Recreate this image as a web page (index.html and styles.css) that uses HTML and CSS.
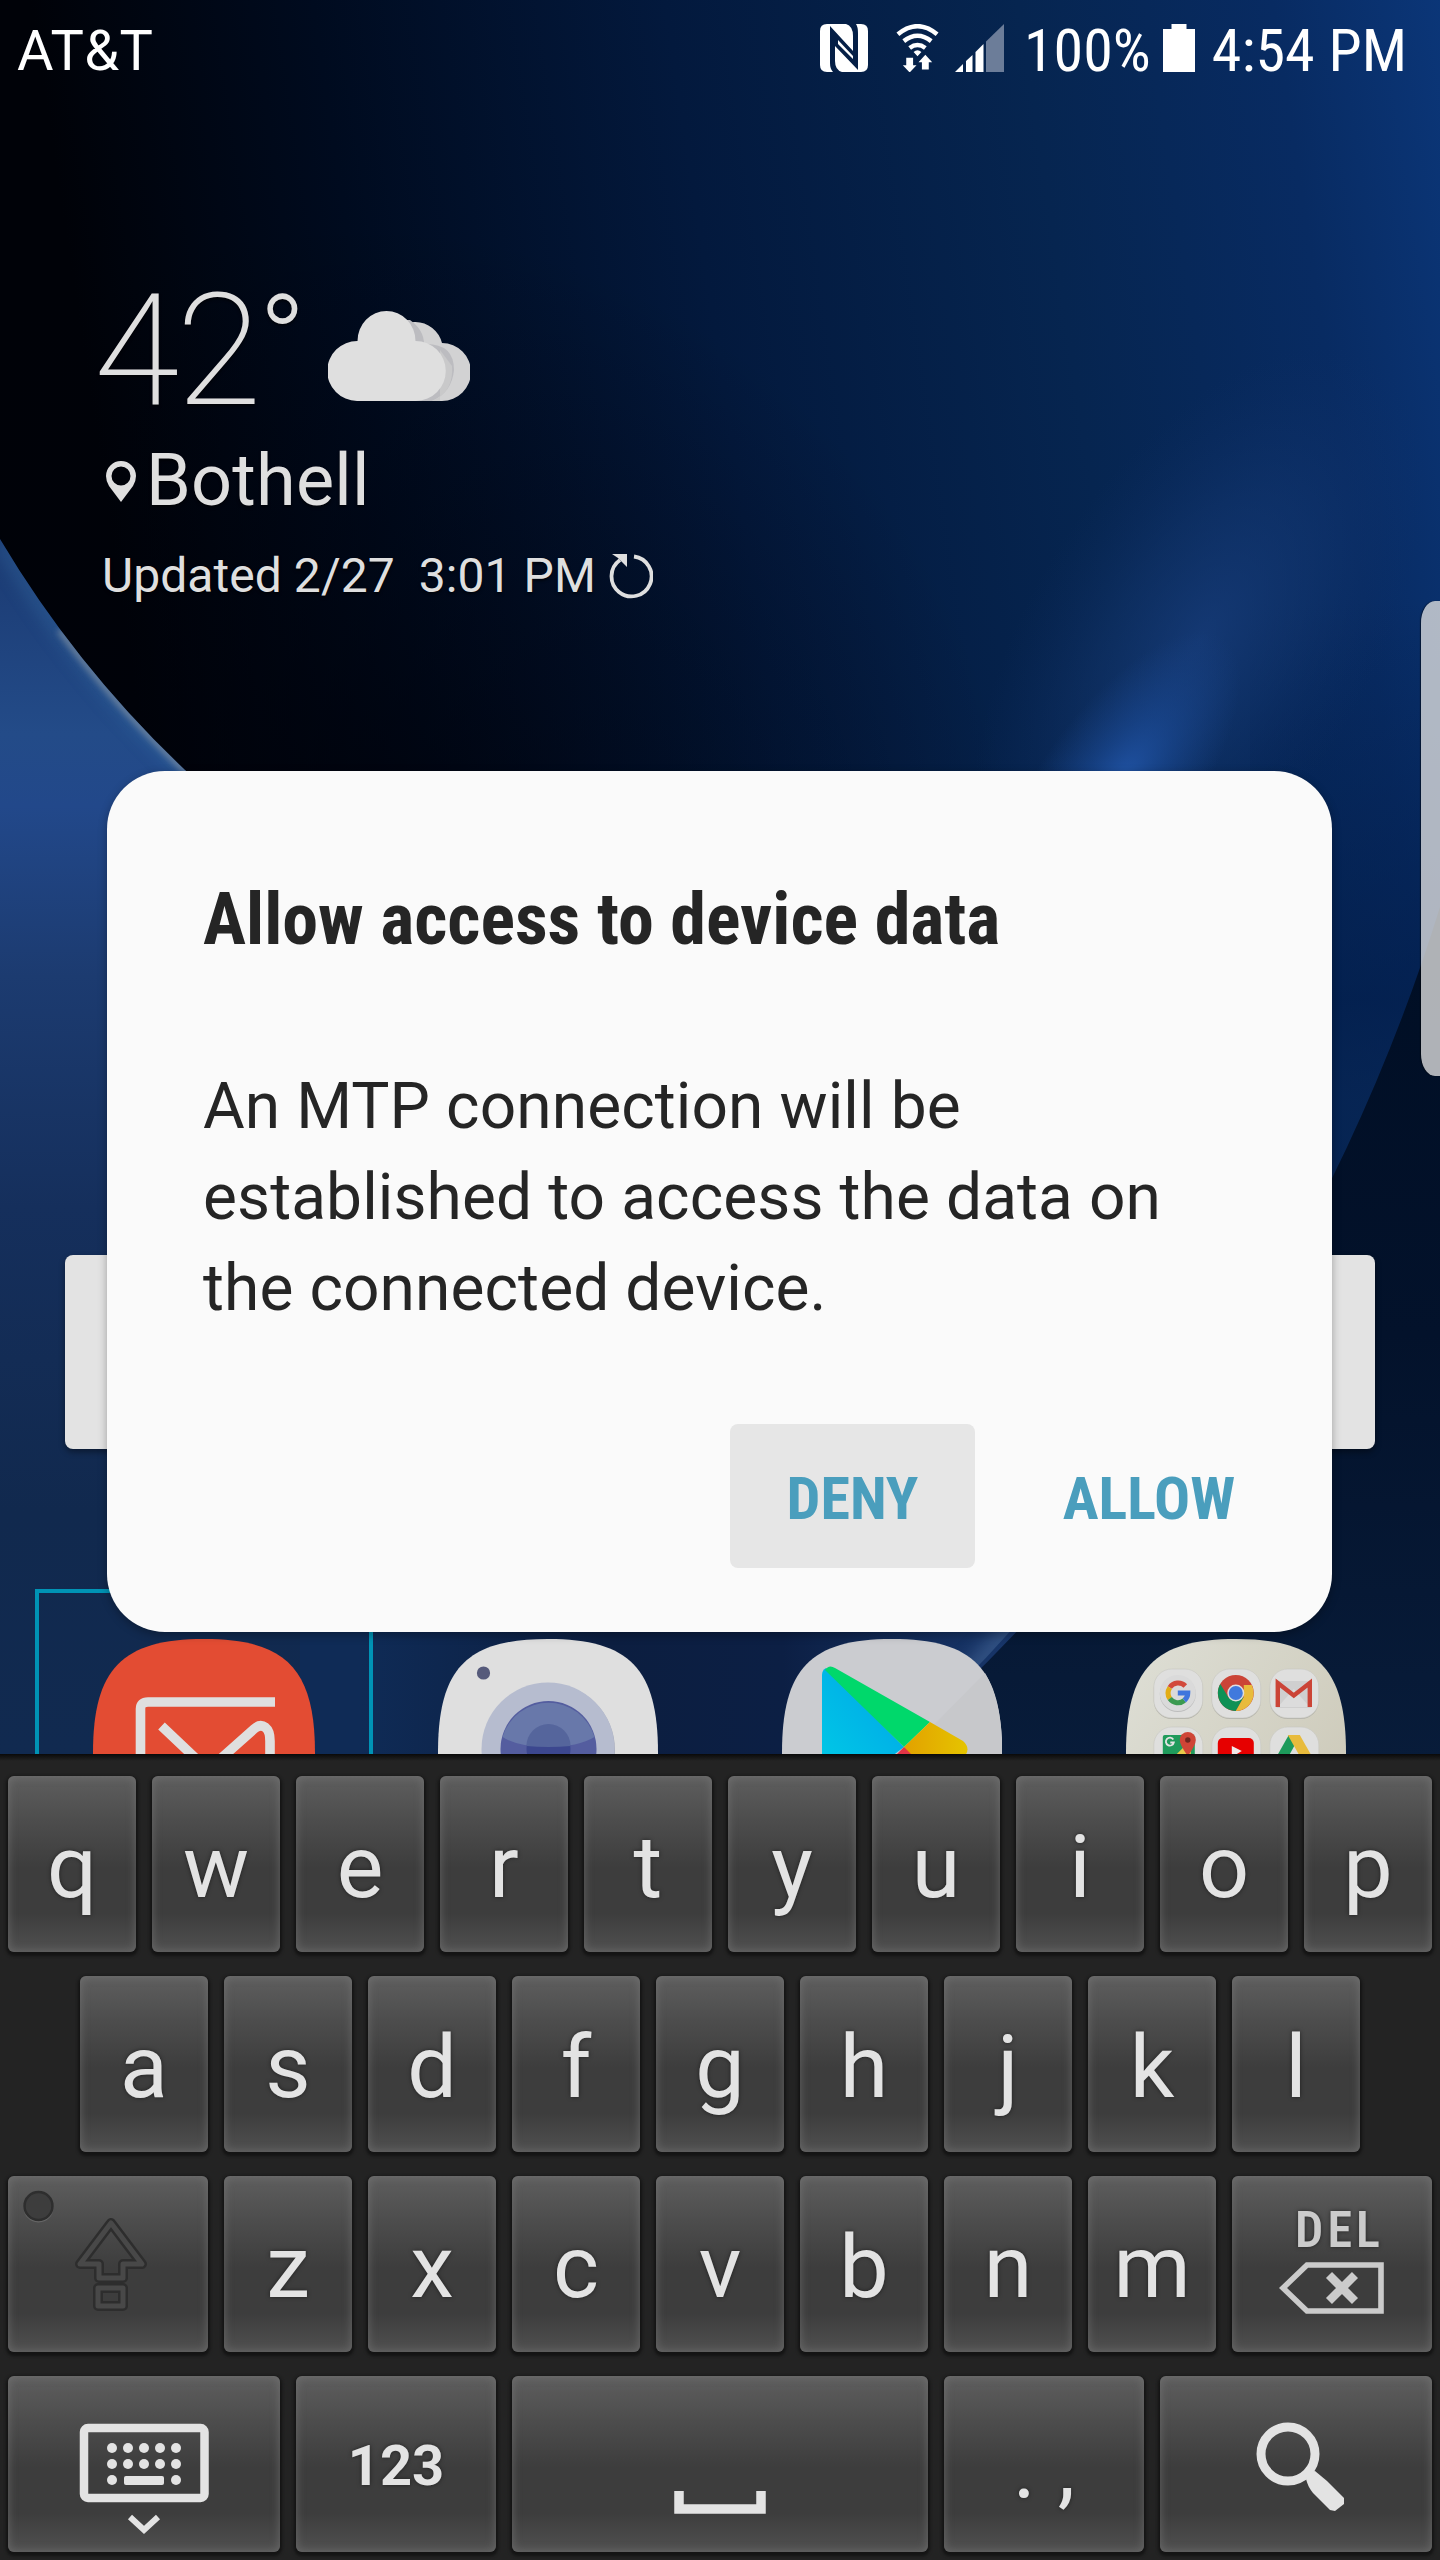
FILE: index.html
```html
<!DOCTYPE html>
<html lang="en">
<head>
<meta charset="utf-8">
<title>Home screen</title>
<link rel="stylesheet" href="styles.css">
</head>
<body>
<main class="phone">
  <svg class="wallpaper" viewBox="0 0 1440 1754" aria-hidden="true">
    <defs>
      <linearGradient id="sky" gradientUnits="userSpaceOnUse" x1="80" y1="330" x2="1460" y2="120">
        <stop offset="0" stop-color="#000208"/>
        <stop offset=".2" stop-color="#000b1f"/>
        <stop offset=".45" stop-color="#03193d"/>
        <stop offset=".7" stop-color="#062550"/>
        <stop offset=".88" stop-color="#082b62"/>
        <stop offset="1" stop-color="#0b3678"/>
      </linearGradient>
      <radialGradient id="fade" gradientUnits="userSpaceOnUse" cx="340" cy="900" r="680">
        <stop offset="0" stop-color="#00020a" stop-opacity=".85"/>
        <stop offset=".4" stop-color="#00020a" stop-opacity=".45"/>
        <stop offset="1" stop-color="#00020a" stop-opacity="0"/>
      </radialGradient>
      <linearGradient id="dusk" gradientUnits="userSpaceOnUse" x1="0" y1="600" x2="0" y2="1100">
        <stop offset="0" stop-color="#021d4c" stop-opacity="0"/>
        <stop offset=".8" stop-color="#021d4a" stop-opacity=".7"/>
        <stop offset="1" stop-color="#06224e" stop-opacity=".6"/>
      </linearGradient>
      <radialGradient id="halo" gradientUnits="userSpaceOnUse" cx="0" cy="0" r="1" gradientTransform="translate(1200 640) rotate(-58) scale(330 170)">
        <stop offset="0" stop-color="#1a4080" stop-opacity=".7"/>
        <stop offset=".5" stop-color="#183c78" stop-opacity=".35"/>
        <stop offset="1" stop-color="#123067" stop-opacity="0"/>
      </radialGradient>
      <radialGradient id="glow" gradientUnits="userSpaceOnUse" cx="0" cy="0" r="1" gradientTransform="translate(1118 784) rotate(-54) scale(180 76)">
        <stop offset="0" stop-color="#2358ae" stop-opacity=".9"/>
        <stop offset=".45" stop-color="#1d4f9f" stop-opacity=".5"/>
        <stop offset="1" stop-color="#1d4a94" stop-opacity="0"/>
      </radialGradient>
      <linearGradient id="rim" gradientUnits="userSpaceOnUse" x1="0" y1="539" x2="0" y2="1754">
        <stop offset="0" stop-color="#1b3a72"/>
        <stop offset=".16" stop-color="#234b88"/>
        <stop offset=".22" stop-color="#22488a"/>
        <stop offset=".36" stop-color="#1c3b70"/>
        <stop offset=".55" stop-color="#152f5c"/>
        <stop offset=".8" stop-color="#11294e"/>
        <stop offset="1" stop-color="#112a50"/>
      </linearGradient>
      <linearGradient id="floor" gradientUnits="userSpaceOnUse" x1="360" y1="0" x2="1010" y2="0">
        <stop offset="0" stop-color="#0f2b56"/>
        <stop offset=".38" stop-color="#0c1e40"/>
        <stop offset=".65" stop-color="#0c1f44"/>
        <stop offset="1" stop-color="#18366a"/>
      </linearGradient>
      <linearGradient id="night" x1="0" y1="0" x2="0" y2="1">
        <stop offset="0" stop-color="#000e24"/>
        <stop offset=".5" stop-color="#03122b"/>
        <stop offset="1" stop-color="#081c3a"/>
      </linearGradient>
      <filter id="soft"><feGaussianBlur stdDeviation="9"/></filter>
      <filter id="fine"><feGaussianBlur stdDeviation="3"/></filter>
      <clipPath id="rimClip"><path d="M0 539A1070 1070 0 0 0 185 770L300 870V1754H0Z"/></clipPath>
      <clipPath id="floorClip"><path d="M360 1600H1038A1850 1850 0 0 1 880 1762H360Z"/></clipPath>
    </defs>
    <rect width="1440" height="1754" fill="url(#sky)"/>
    <rect width="1440" height="1754" fill="url(#fade)"/>
    <rect x="1250" y="600" width="190" height="900" fill="url(#dusk)"/>
    <rect width="1440" height="1200" fill="url(#halo)"/>
    <rect width="1440" height="1200" fill="url(#glow)"/>
    <g clip-path="url(#rimClip)">
      <rect y="500" width="400" height="1254" fill="url(#rim)"/>
      <path d="M0 539A1070 1070 0 0 0 185 770L300 870" fill="none" stroke="#4384b8" stroke-width="14" opacity=".35" filter="url(#soft)"/>
      <path d="M60 630A1070 1070 0 0 0 185 770L300 870" fill="none" stroke="#a3a8ac" stroke-width="7" opacity=".55" filter="url(#fine)"/>
    </g>
    <rect x="300" y="1560" width="760" height="194" fill="url(#floor)"/>
    <path d="M1440 907A1850 1850 0 0 1 880 1762H1440Z" fill="url(#night)"/>
    <g clip-path="url(#floorClip)">
      <path d="M1038 1600A1850 1850 0 0 1 880 1762" fill="none" stroke="#5577a6" stroke-width="20" opacity=".5" filter="url(#soft)"/>
    </g>
  </svg>

  <section class="home">
    <header class="status">
      <span class="carrier">AT&amp;T</span>
      <div class="indicators">
        <svg class="nfc" viewBox="0 0 48 48"><path d="M7 0H26Q33 2 33 12V27L10 2V39Q10 45 13 48H7Q0 48 0 41V7Q0 0 7 0Z M36 0H41Q48 0 48 7V41Q48 48 41 48H22Q15 46 15 37V22L38 46V9Q38 3 36 0Z M18 16L33 32V35L18 20Z" fill="#fff"/></svg>
        <svg class="wifi" viewBox="0 0 43 49"><g fill="none" stroke="#fff" stroke-width="4.6"><path d="M1.500 10.500Q21.500 -6 41.500 10.500"/><path d="M7.500 17.500Q21.500 6.500 35.500 17.500"/><path d="M13.500 24.500Q21.500 18.500 29.500 24.500"/></g><path d="M21.500 33L17.500 28.500Q21.500 25 25.500 28.500Z M10 34.500H17V42H20.500L13.500 49.500L6.500 42H10Z M26 46.500V39H22.500L29.500 31.500L36.500 39H33V46.500Z" fill="#fff"/></svg>
        <svg class="signal" viewBox="0 0 49 48"><path d="M0 48L8 40V48Z M11 37L17.500 31V48H11Z M20.500 28L28.500 20V48H20.500Z" fill="#fff"/><path d="M31 17.500L49 0V48H31Z" fill="#6c7d99"/></svg>
        <span class="charge">100%</span>
        <svg class="battery" viewBox="0 0 32 48"><path d="M8.500 0H23.500V5H32V48H0V5H8.500Z" fill="#fff"/></svg>
        <span class="clock">4:54 PM</span>
      </div>
    </header>

    <section class="weather">
      <div class="now">
        <span class="temp">42<span class="degree">°</span></span>
        <svg class="cloud" viewBox="0 0 142 91"><g><path d="M60 91A30 30 0 0 1 60 32A28 28 0 0 1 114 33A29 29 0 0 1 114 91Z" fill="#d2d2d3"/><path d="M82 10Q96 20 96 34Q126 33 126 60Q124 82 104 91H60V10Z" fill="#bcbcc0"/><path d="M104 91Q126 82 124 56L112 40V91Z" fill="#c9c9ca"/><path d="M29 91A30 30 0 0 1 29.500 31A29 30 0 0 1 87.500 31A30 30 0 0 1 88 91Z" fill="#dfdfdf"/></g></svg>
      </div>
      <div class="place">
        <svg class="pin" viewBox="0 0 30 41"><path fill-rule="evenodd" d="M15 0A15 15 0 0 1 30 15Q30 20 27 25L15 41L3 25Q0 20 0 15A15 15 0 0 1 15 0ZM15 5.500A9.500 9.500 0 1 0 15 24.500A9.500 9.500 0 1 0 15 5.500Z" fill="#dfdfdf"/></svg>
        <span>Bothell</span>
      </div>
      <div class="updated">
        <span>Updated 2/27  3:01 PM</span>
        <svg class="reload" viewBox="0 0 45 46"><path d="M26 3.500A20 20 0 1 1 12 7" fill="none" stroke="#dfdfdf" stroke-width="3.800"/><path d="M4 1H19V14L14.500 9.500L10 5Z" fill="#dfdfdf"/></svg>
      </div>
    </section>

    <div class="search"></div>

    <nav class="dock">
      <div class="slot focused">
        <svg class="app mail" viewBox="0 0 220 220"><path d="M-1 114C-1 30 28 0 110 0C192 0 221 30 221 114V220H-1Z" fill="#e34c33"/><g fill="none" stroke="#dfdfdf" stroke-width="9.600"><path d="M46.500 130V70Q46.500 63 54 63H181"/><path d="M67.500 87L114 131L160 90Q166 84.500 171.500 88.500Q176 92 176 102V130"/></g></svg>
      </div>
      <div class="slot">
        <svg class="app" viewBox="0 0 220 220"><path d="M0 114C0 30 28 0 110 0C192 0 220 30 220 114V220H0Z" fill="#dfdfdf"/><circle cx="45.500" cy="34" r="6.600" fill="#565a7b"/><circle cx="110.500" cy="111" r="66.500" fill="#a9adbc"/><circle cx="110" cy="110" r="66.500" fill="#b6bccf"/><circle cx="110.500" cy="110" r="48" fill="#545d9f"/><path d="M64.500 98A48 48 0 0 1 156.500 98Q140 108 110.500 108Q80 108 64.500 98Z" fill="#6878aa"/><circle cx="110.500" cy="110" r="22" fill="#3c478f"/><path d="M88.500 107A22 22 0 0 1 132.500 107Q122 108 110.500 108Q99 108 88.500 107Z" fill="#55659c"/></svg>
      </div>
      <div class="slot">
        <svg class="app" viewBox="0 0 220 220"><defs><linearGradient id="pb" x1="1" y1="0" x2="0" y2="1"><stop offset="0" stop-color="#00a3e8"/><stop offset="1" stop-color="#00c8e6"/></linearGradient><linearGradient id="py" x1="0" y1="0" x2="1" y2="0"><stop offset="0" stop-color="#e2a100"/><stop offset="1" stop-color="#e5c400"/></linearGradient></defs><path d="M0 114C0 30 28 0 110 0C192 0 220 30 220 114V220H0Z" fill="#cbccd0"/><path d="M203 34L145 93L115 125H220V100Q218 60 203 34Z" fill="#c7c8cb"/><path d="M40 36Q40 31 44 29L122 108L100 125H40Z" fill="url(#pb)"/><path d="M43 31Q47 25 53 29L148 83L122 108Z" fill="#00d86b"/><path d="M148 83L181 102Q190 110 181 119L140 140L122 108Z" fill="url(#py)"/><path d="M122 108L105 125H139Z" fill="#e33446"/></svg>
      </div>
      <div class="slot">
        <svg class="app" viewBox="0 0 220 220"><defs><linearGradient id="fo" x1="0" y1="0" x2="1" y2=".6"><stop offset="0" stop-color="#dedfd6"/><stop offset="1" stop-color="#cecbbb"/></linearGradient></defs><path d="M0 114C0 30 28 0 110 0C192 0 220 30 220 114V220H0Z" fill="url(#fo)"/>
          <g transform="translate(.8 0)">
          <g fill="#b3b2a9"><rect x="27" y="31" width="49" height="49" rx="18"/><rect x="85" y="31" width="49" height="49" rx="18"/><rect x="143" y="31" width="49" height="49" rx="18"/></g>
          <g fill="#dfdfde" stroke="#c8c8c1" stroke-width=".6"><rect x="27" y="30" width="49" height="49" rx="18"/><rect x="85" y="30" width="49" height="49" rx="18"/><rect x="143" y="30" width="49" height="49" rx="18"/><rect x="27" y="88" width="49" height="49" rx="18"/><rect x="85" y="88" width="49" height="49" rx="18"/><rect x="143" y="88" width="49" height="49" rx="18"/></g>
          <circle cx="51" cy="55" r="18" fill="#bdbdbd"/><circle cx="51" cy="54" r="18" fill="#dadada"/>
          <g fill="none" stroke-width="5"><path d="M58.500 47A10 10 0 0 0 43 48.500" stroke="#d24a3c"/><path d="M43 48.500A10 10 0 0 0 43 59.500" stroke="#e3ad15"/><path d="M43 59.500A10 10 0 0 0 57.500 61.500" stroke="#3b9a50"/><path d="M57.500 61.500A10 10 0 0 0 61 54H51" stroke="#4076dd"/></g>
          <circle cx="109" cy="54" r="18" fill="#cb4437"/><path d="M93.500 45A18 18 0 0 0 109 72L117 58L102 59Z" fill="#0f9155"/><path d="M125 46A18 18 0 0 1 109 72L117 58V46Z" fill="#e8bb3c"/><circle cx="109" cy="54" r="8.500" fill="#dfdfdf"/><circle cx="109" cy="54" r="7" fill="#4079dd"/>
          <rect x="149" y="42" width="36" height="27" rx="2" fill="#cfcfcf"/><path d="M151 68L167 50L183 68Z" fill="#dcdcdc"/><path d="M151 68V44L167 56.500L183 44V68" fill="none" stroke="#cb4437" stroke-width="4.400"/>
          <rect x="36" y="96" width="32" height="30" rx="2" fill="#1f9b5c"/><path d="M40 125L64 101V125Z" fill="#e8c94a"/><path d="M46.500 100.500A4 4 0 1 0 47 103.500H43.500" fill="none" stroke="#e4e4e4" stroke-width="1.800"/><path d="M61 117Q53 106 53 101A8 8 0 0 1 69 101Q69 106 61 117Z" fill="#cf4537"/><circle cx="61" cy="101" r="2.700" fill="#6f2620"/>
          <rect x="91" y="99" width="36" height="28" rx="5" fill="#e60000"/><path d="M105 107L115 112L105 118Z" fill="#f0e6e6"/>
          <path d="M162 96L168 106L157 126H145Z" fill="#1d9a5b"/><path d="M161 96H173L190 126H178Z" fill="#e8bb3c"/>
          </g>
        </svg>
      </div>
    </nav>
  </section>

  <div class="edge-handle"></div>

  <section class="dialog" role="dialog">
    <h1>Allow access to device data</h1>
    <p>An MTP connection will be<br>established to access the data on<br>the connected device.</p>
    <div class="actions">
      <button class="deny">DENY</button>
      <button class="allow">ALLOW</button>
    </div>
  </section>

  <section class="keyboard">
    <div class="row">
      <span class="key">q</span><span class="key">w</span><span class="key">e</span><span class="key">r</span><span class="key">t</span><span class="key">y</span><span class="key">u</span><span class="key">i</span><span class="key">o</span><span class="key">p</span>
    </div>
    <div class="row">
      <span class="key">a</span><span class="key">s</span><span class="key">d</span><span class="key">f</span><span class="key">g</span><span class="key">h</span><span class="key">j</span><span class="key">k</span><span class="key">l</span>
    </div>
    <div class="row">
      <span class="key mid">
        <svg viewBox="0 0 200 176"><circle cx="30.500" cy="31.500" r="15" fill="#686868"/><circle cx="30.500" cy="30" r="14" fill="#3d3d3d" stroke="#2e2e2e" stroke-width="2.500"/><g fill="none" stroke-linejoin="round"><g stroke="#2d2d2d" stroke-width="10"><path d="M103 47L134 88H115V102H91V88H72Z"/><path d="M90 112H115V130H90Z"/></g><g stroke="#484848" stroke-width="5"><path d="M103 47L134 88H115V102H91V88H72Z"/><path d="M90 112H115V130H90Z"/></g></g></svg>
      </span>
      <span class="key">z</span><span class="key">x</span><span class="key">c</span><span class="key">v</span><span class="key">b</span><span class="key">n</span><span class="key">m</span>
      <span class="key mid del">
        <span class="del-label">DEL</span>
        <svg class="backspace" viewBox="0 0 106 54"><path d="M4 27L28 4H102V50H28Z" fill="none" stroke="#cbcbcb" stroke-width="5.600"/><path d="M50 14L76 40M76 14L50 40" stroke="#cbcbcb" stroke-width="8.500"/></svg>
      </span>
    </div>
    <div class="row">
      <span class="key wide">
        <svg viewBox="0 0 272 176"><g fill="none" stroke="#e3e3e3"><rect x="76" y="52" width="120.500" height="70" rx="4" stroke-width="8.500"/><path d="M122 141L136 154L150 141" stroke-width="6"/></g><g fill="#e3e3e3"><circle cx="104" cy="72" r="5"/><circle cx="120" cy="72" r="5"/><circle cx="136" cy="72" r="5"/><circle cx="152" cy="72" r="5"/><circle cx="168" cy="72" r="5"/><circle cx="104" cy="88" r="5"/><circle cx="120" cy="88" r="5"/><circle cx="136" cy="88" r="5"/><circle cx="152" cy="88" r="5"/><circle cx="168" cy="88" r="5"/><circle cx="104" cy="104" r="5"/><rect x="116" y="100" width="40" height="9" rx="2"/><circle cx="168" cy="104" r="5"/></g></svg>
      </span>
      <span class="key mid num">123</span>
      <span class="key space">
        <svg viewBox="0 0 416 176"><path d="M167 115V133H249V115" fill="none" stroke="#e3e3e3" stroke-width="9.500"/></svg>
      </span>
      <span class="key mid">. ,</span>
      <span class="key wide">
        <svg viewBox="0 0 272 176"><circle cx="128" cy="78" r="27" fill="none" stroke="#e3e3e3" stroke-width="9"/><path d="M146 103Q149 95 155 95L167 105L184 122V128L175 135L170 134L153 117Q148 111 146 103Z" fill="#e3e3e3"/></svg>
      </span>
    </div>
  </section>
</main>
</body>
</html>
```
FILE: styles.css
```css
* { box-sizing: border-box; }
body { margin: 0; background: #000; }
svg { display: block; }

.phone {
  position: relative;
  width: 1440px;
  height: 2560px;
  overflow: hidden;
  font-family: Roboto, sans-serif;
}
.wallpaper { position: absolute; inset: 0; width: 1440px; height: 1754px; }

.home {
  position: relative;
  display: flex;
  flex-direction: column;
  height: 1754px;
  overflow: hidden;
}

/* Status bar */
.status {
  display: flex;
  justify-content: space-between;
  align-items: center;
  height: 102px;
  padding: 0 33px 0 17px;
  color: #fff;
  font-size: 56px;
}
.carrier { padding-bottom: 1px; letter-spacing: .4px; }
.indicators {
  display: flex;
  align-items: center;
  font-family: "Roboto Condensed", Roboto, sans-serif;
  font-stretch: 75%;
  font-size: 60px;
  white-space: nowrap;
}
.charge, .clock { padding-bottom: 2px; }
.indicators svg { margin-bottom: 6px; height: 48px; }
.nfc { width: 48px; margin-right: 28px; }
.wifi { width: 43px; margin-right: 16px; }
.signal { width: 49px; margin-right: 20px; }
.battery { width: 32px; margin: 0 17px 0 12px; }

/* Weather widget */
.weather { margin: 170px 0 0 98px; color: #dfdfdf; text-shadow: 0 2px 3px rgba(0, 0, 0, .6); }
.now { display: flex; height: 160px; }
.temp { margin-left: -4px; font-size: 155px; font-weight: 200; letter-spacing: -3px; line-height: 159px; width: 234px; white-space: nowrap; }
.degree { font-size: 126px; font-weight: 300; line-height: 0; vertical-align: 20px; }
.cloud { width: 142px; height: 91px; margin-top: 38px; }
.place { display: flex; align-items: center; gap: 10px; margin: 7px 0 23px 8px; font-size: 72px; letter-spacing: .2px; line-height: 86px; height: 84px; }
.pin { width: 30px; height: 41px; }
.updated { display: flex; align-items: center; gap: 12px; margin-left: 4px; font-size: 48px; letter-spacing: .06px; line-height: 60px; white-space: pre; }
.reload { width: 45px; height: 46px; }

.search {
  height: 194px;
  margin: 649px 65px 0;
  border-radius: 8px;
  background: #e3e3e3;
  box-shadow: 0 3px 6px rgba(0, 0, 0, .4);
}

/* Dock */
.dock {
  display: grid;
  grid-template-columns: repeat(4, 344px);
  height: 165px;
  margin-top: 140px;
  padding: 0 32px;
}
.slot { height: 270px; margin: 0 3px; padding-top: 50px; }
.focused { padding-top: 46px; border: 4px solid #0093b5; }
.app { width: 220px; height: 220px; margin: 0 auto; }
.mail { overflow: visible; }

.edge-handle {
  position: absolute;
  top: 601px;
  right: 0;
  width: 19px;
  height: 475px;
  border-radius: 14px 0 0 14px / 22px 0 0 22px;
  background: rgba(222, 222, 222, .79);
  box-shadow: -1px 0 1px rgba(0, 0, 0, .5);
}

/* Permission dialog */
.dialog {
  position: absolute;
  top: 771px;
  left: 107px;
  width: 1225px;
  height: 861px;
  padding: 107px 33px 0 96px;
  border-radius: 58px;
  background: #fafafa;
  box-shadow: 0 3px 10px rgba(0, 0, 0, .3);
  color: #252525;
}
.dialog h1 {
  margin: 0 0 99px;
  font: 700 72px/84px "Roboto Condensed", Roboto, sans-serif;
  font-stretch: 75%;
}
.dialog p { margin: 0 0 90px; font-size: 64px; letter-spacing: .1px; line-height: 91px; white-space: nowrap; }
.actions { display: flex; justify-content: flex-end; gap: 24px; }
.actions button {
  width: 245px;
  height: 144px;
  padding: 4px 0 0;
  border: 0;
  border-radius: 8px;
  background: none;
  color: #4a9ebd;
  font: 700 60px "Roboto Condensed", Roboto, sans-serif;
  font-stretch: 75%;
}
.actions .deny { background: #e6e6e6; }
.actions .allow { width: 300px; }

/* Keyboard */
.keyboard {
  position: relative;
  display: flex;
  flex-direction: column;
  gap: 24px;
  height: 806px;
  padding-top: 22px;
  background: linear-gradient(#0a0a0a, #232323 7px);
}
.row { display: flex; justify-content: center; gap: 16px; }
.key {
  width: 128px;
  height: 176px;
  border-radius: 6px;
  background: linear-gradient(#5e5e5e, #4d4d4d 25%, #3d3d3d 52%, #3d3d3d 78%, #505050 100%);
  box-shadow: inset 0 0 8px 1px rgba(130, 130, 130, .5), 0 2px 3px 2px #141414;
  color: #e3e3e3;
  font-size: 88px;
  line-height: 181px;
  text-align: center;
  text-shadow: 0 0 4px rgba(0, 0, 0, .5);
}
.key svg { width: 100%; height: 100%; }
.mid { width: 200px; }
.wide { width: 272px; }
.space { width: 416px; }
.num { font-size: 56px; font-weight: 700; line-height: 180px; }
.del { display: flex; flex-direction: column; align-items: center; }
.del-label {
  margin: 24px 0 0 15px;
  color: #cbcbcb;
  font: 600 50px/60px "Roboto Condensed", Roboto, sans-serif;
  font-stretch: 75%;
  letter-spacing: 4px;
}
.key .backspace { width: 106px; height: 54px; margin-top: 1px; }
```
